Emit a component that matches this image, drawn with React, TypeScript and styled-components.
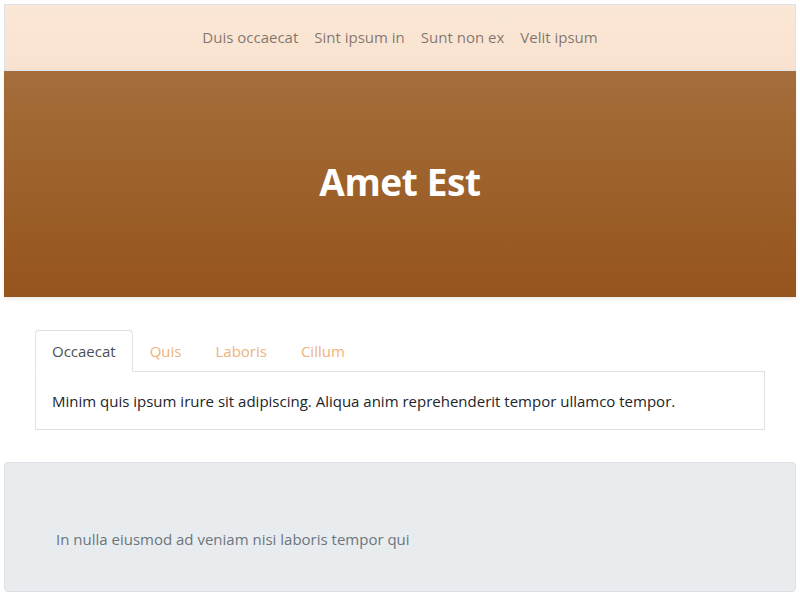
import React from "react";
import styled, { createGlobalStyle } from "styled-components";

const Global = createGlobalStyle`
  html, body { margin: 0; padding: 0; background: #fff; }
  body {
    padding: 4px;
    font-family: "Open Sans", "Noto Sans", sans-serif;
    font-size: 15px;
    line-height: 1.5;
    color: #212529;
  }
  * { box-sizing: border-box; }
`;

const Page = styled.div`
  display: flex;
  flex-direction: column;
`;

const NavBar = styled.nav`
  height: 67px;
  display: flex;
  align-items: center;
  justify-content: center;
  gap: 16px;
  background: linear-gradient(180deg, #fbe7d6 0%, #f9e2d0 100%);
  border: 1px solid #dde3ea;
`;

const NavLink = styled.a`
  color: rgba(0, 0, 0, 0.5);
  font-size: 15px;
  text-decoration: none;
`;

const Hero = styled.header`
  height: 226px;
  display: flex;
  align-items: center;
  justify-content: center;
  padding-bottom: 5px;
  background: linear-gradient(180deg, #a56e3b 0%, #95541b 100%);
  box-shadow: 0 2px 4px rgba(0, 0, 0, 0.08);
`;

const HeroTitle = styled.h1`
  margin: 0;
  color: #fff;
  font-size: 37px;
  font-weight: 700;
  letter-spacing: -0.4px;
`;

const TabsSection = styled.section`
  padding: 33px 31px 32px;
`;

const TabList = styled.div`
  display: flex;
  border-bottom: 1px solid #dee2e6;
`;

const Tab = styled.button<{ $active?: boolean }>`
  font: inherit;
  font-size: 15px;
  background: ${(p) => (p.$active ? "#fff" : "transparent")};
  padding: 8px 16px;
  height: 42px;
  margin-bottom: -1px;
  border: 1px solid ${(p) => (p.$active ? "#dee2e6" : "transparent")};
  border-bottom-color: ${(p) => (p.$active ? "#fff" : "transparent")};
  border-radius: 4px 4px 0 0;
  color: ${(p) => (p.$active ? "#495057" : "#f0b27c")};
  cursor: pointer;
`;

const TabPanel = styled.div`
  border: 1px solid #dee2e6;
  border-top: none;
  padding: 18px 16px 0;
  height: 58px;
  font-size: 15px;
  color: #212529;
`;

const Jumbotron = styled.section`
  background: #e9ecef;
  border: 1px solid #dcdfe3;
  border-radius: 4px;
  height: 130px;
  padding: 65px 51px 0;
  color: #6c757d;
  font-size: 15px;
`;

export default function App() {
  return (
    <Page>
      <Global />
      <NavBar>
        <NavLink href="#">Duis occaecat</NavLink>
        <NavLink href="#">Sint ipsum in</NavLink>
        <NavLink href="#">Sunt non ex</NavLink>
        <NavLink href="#">Velit ipsum</NavLink>
      </NavBar>
      <Hero>
        <HeroTitle>Amet Est</HeroTitle>
      </Hero>
      <TabsSection>
        <TabList>
          <Tab $active>Occaecat</Tab>
          <Tab>Quis</Tab>
          <Tab>Laboris</Tab>
          <Tab>Cillum</Tab>
        </TabList>
        <TabPanel>
          Minim quis ipsum irure sit adipiscing. Aliqua anim reprehenderit tempor ullamco tempor.
        </TabPanel>
      </TabsSection>
      <Jumbotron>In nulla eiusmod ad veniam nisi laboris tempor qui</Jumbotron>
    </Page>
  );
}
